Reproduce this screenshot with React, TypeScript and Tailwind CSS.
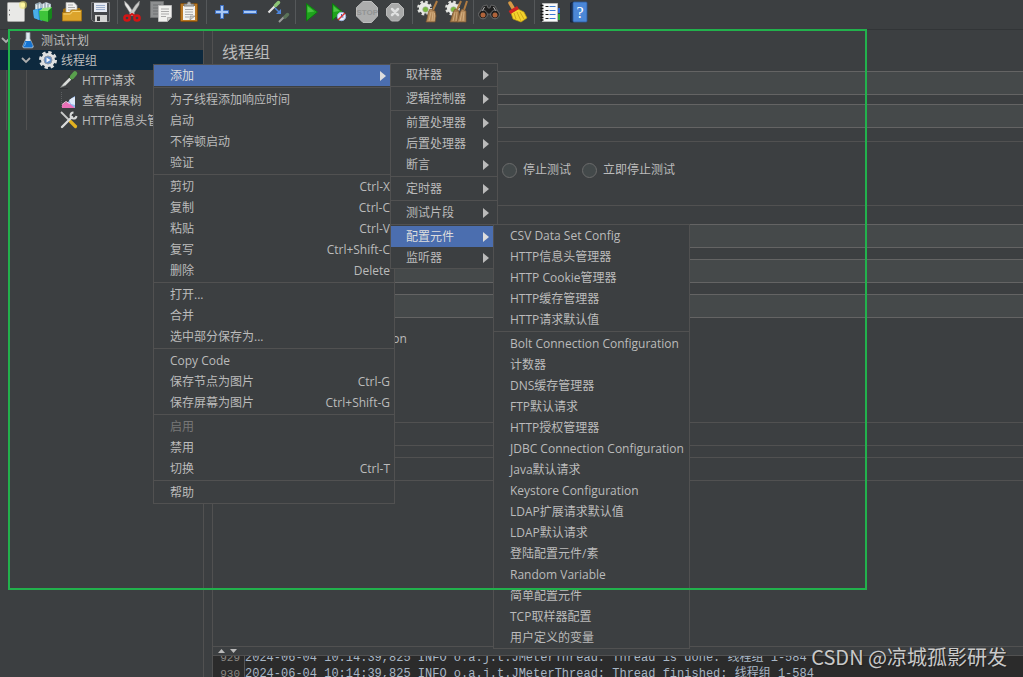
import React, { useState } from 'react'
import clsx from 'clsx'

const uiFont = 'font-["Open_Sans","Noto_Sans_CJK_SC",sans-serif]'

/* ---------- toolbar icons ---------- */

function Icon({ children }: { children: React.ReactNode }) {
    return (
        <svg viewBox="0 0 24 24" className="size-6 shrink-0" aria-hidden="true">
            {children}
        </svg>
    )
}

const NewIcon = () => (
    <Icon>
        <rect x="2.5" y="2.5" width="17" height="19" rx="1" fill="#e9e9e7" stroke="#a5a5a3" />
        <path d="M4.5 9.5v1.5M4.5 14v1.5" stroke="#777" />
        <circle cx="18" cy="5" r="4" fill="#f4ea6a" opacity=".55" />
        <circle cx="18" cy="5" r="2.2" fill="#fff7a0" />
    </Icon>
)

const TemplatesIcon = () => (
    <Icon>
        <path d="M2 4l5-2 2 2 4-2 5 2v7H2z" fill="#aebfc9" />
        <path d="M3 5l4-1v6H3zM10 4l4-1 3 2v6h-7z" fill="#e4ebef" />
        <path d="M5 3v6M12 3v6M15 4v5" stroke="#6e8795" />
        <path d="M0 10l9-2v13l-8-3z" fill="#1f86d0" />
        <path d="M0 10l5-1 1 11-5-2z" fill="#49aee9" />
        <path d="M6 11l9-1v12l-8-2z" fill="#3ec43a" />
        <path d="M15 10l4-3v11l-4 4z" fill="#15871b" />
        <path d="M6 11l4-3 9-1-4 4z" fill="#90e87b" />
    </Icon>
)

const OpenIcon = () => (
    <Icon>
        <path d="M2 9l3-1h14v12H2z" fill="#9b6a0b" />
        <path d="M5 2.5h8l3 3V14H5z" fill="#f2f2f0" stroke="#aaa" strokeWidth=".7" />
        <path d="M7 5h5M7 7.5h7M7 10h7" stroke="#aaa" />
        <path d="M1.500 12.500h7l2-2.500h10v11h-19z" fill="#dca42c" stroke="#a87510" strokeWidth=".8" />
        <path d="M2.500 14h7l2-2.500h8" fill="none" stroke="#f7d579" />
    </Icon>
)

const SaveIcon = () => (
    <Icon>
        <path d="M2.500 2.500h18v19h-16l-2-2z" fill="#45474a" stroke="#77797c" />
        <rect x="5" y="3" width="13" height="9" fill="#e6eaf2" />
        <path d="M7 5.500h9M7 7.500h9M7 9.500h9" stroke="#9baecd" />
        <rect x="6" y="15" width="12" height="7" fill="#d5d5d3" />
        <rect x="8" y="16.500" width="3" height="4.500" fill="#38393b" />
    </Icon>
)

const CutIcon = () => (
    <Icon>
        <path d="M2.500 1l4 4 6 9-2.500 2-7-11z" fill="#e7e7e5" stroke="#999" strokeWidth=".5" />
        <path d="M17.500 1l-4 4-6 9 2.500 2 7-11z" fill="#c9c9c7" stroke="#999" strokeWidth=".5" />
        <ellipse cx="5" cy="18" rx="2.600" ry="2.600" fill="none" stroke="#d31515" strokeWidth="2.500" />
        <ellipse cx="15" cy="18" rx="2.600" ry="2.600" fill="none" stroke="#d31515" strokeWidth="2.500" />
        <path d="M7 16l3-2 3 2" stroke="#d31515" strokeWidth="2" fill="none" />
    </Icon>
)

const CopyIcon = () => (
    <Icon>
        <path d="M.5 1.500h13v16H.5z" fill="#8d8f90" stroke="#707273" />
        <path d="M3 5h8M3 8h8M3 11h5M3 14h5" stroke="#6f7172" />
        <path d="M8.500 5.500h13v12l-4 4h-9z" fill="#f0f0ee" stroke="#bbb" />
        <path d="M11 9h8M11 11.500h8M11 14h8M11 16.500h5" stroke="#aaa" />
        <path d="M17.500 21.500v-4h4z" fill="#cfcfcd" stroke="#999" strokeWidth=".6" />
    </Icon>
)

const PasteIcon = () => (
    <Icon>
        <rect x="2.500" y="3.500" width="17" height="18" rx="1" fill="#bb7a25" stroke="#7e4e10" />
        <path d="M5 6h12v14H5z" fill="#f2f2ef" />
        <path d="M7 9.500h8M7 12h8M7 14.500h8M7 17h4" stroke="#aaa" />
        <path d="M12 20v-4l5 0z" fill="#c8c8c5" stroke="#888" strokeWidth=".6" />
        <path d="M6 6V4h3c0-3 4-3 4 0h3v2z" fill="#b9bbb8" stroke="#666" strokeWidth=".8" />
    </Icon>
)

const PlusIcon = () => (
    <Icon>
        <path d="M9.500 5.500h3v5h5v3h-5v5h-3v-5h-5v-3h5z" fill="#a9c9f5" stroke="#3e6fc0" />
    </Icon>
)

const MinusIcon = () => (
    <Icon>
        <rect x="4.500" y="10.500" width="13" height="3" fill="#a9c9f5" stroke="#3e6fc0" />
    </Icon>
)

const ToggleIcon = () => (
    <Icon>
        <path d="M1.500 12.500l7-7" stroke="#e6e6e6" strokeWidth="2.200" />
        <path d="M7 4l3 3" stroke="#3d3d3d" strokeWidth="1.500" />
        <path d="M8.500 5.500l3-3" stroke="#8cc476" strokeWidth="3.500" strokeLinecap="round" />
        <path d="M8 8l4 4" stroke="#4d86dd" strokeWidth="1.500" />
        <path d="M14 9v5H9z" fill="#4d86dd" />
        <path d="M12 22l5-5" stroke="#9a9c9b" strokeWidth="2" />
        <path d="M18 17l2.500-2.500" stroke="#5b7358" strokeWidth="3.500" strokeLinecap="round" />
    </Icon>
)

const RunIcon = () => (
    <Icon>
        <path d="M6.500 3.500l11 8.500-11 9z" fill="#1fa31d" stroke="#0d7a10" />
        <path d="M7.500 6l7 5.500-7 1z" fill="#5cd253" opacity=".7" />
    </Icon>
)

const RunNoTimersIcon = () => (
    <Icon>
        <path d="M4.500 3.500l10 8.500-10 8z" fill="#1fa31d" stroke="#0d7a10" />
        <path d="M5.500 6l6 5-6 1z" fill="#5cd253" opacity=".7" />
        <circle cx="13.500" cy="16.500" r="4.200" fill="#e6eefc" stroke="#9db4dc" />
        <path d="M13.500 14v3h2" stroke="#3866b5" fill="none" />
        <path d="M10 20l7-7" stroke="#dc3030" strokeWidth="1.500" />
    </Icon>
)

const StopIcon = () => (
    <Icon>
        <path d="M7 1.500h8.500l6 6V16l-6 6.500H7L.5 16V7.500z" fill="#acadad" stroke="#bdbebe" />
        <text x="11.200" y="15" textAnchor="middle" fontSize="8" fontWeight="700" fontFamily="Liberation Sans, sans-serif" fill="#929494">
            STOP
        </text>
    </Icon>
)

const ShutdownIcon = () => (
    <Icon>
        <path d="M7.500 3.500h7l5 5v7l-5 5.500h-7l-5-5.500v-7z" fill="#a9aaaa" stroke="#b9baba" />
        <path d="M8 9l6 6M14 9l-6 6" stroke="#dfe0e0" strokeWidth="2.500" strokeLinecap="round" />
    </Icon>
)

const GearShape = () => (
    <>
        <circle cx="7.500" cy="8" r="6.200" fill="none" stroke="#e0e1de" strokeWidth="2.400" strokeDasharray="2.600 2.270" />
        <circle cx="7.500" cy="8" r="5.600" fill="#e9eae7" />
        <circle cx="8.500" cy="9.500" r="2.800" fill="#79b83f" stroke="#aaa" strokeWidth=".6" />
    </>
)

const ClearIcon = () => (
    <Icon>
        <GearShape />
        <path d="M20 1l-4 9" stroke="#b07c42" strokeWidth="2" />
        <path d="M13 9l5 2 1 5-1 6-9 0c2-4 1-9 4-13z" fill="#b48a5b" stroke="#7d5730" strokeWidth=".7" />
        <path d="M14 12l-2 9M16 12l-1 9M17.500 13l-.5 8" stroke="#e0bf91" strokeWidth=".7" />
    </Icon>
)

const ClearAllIcon = () => (
    <Icon>
        <GearShape />
        <path d="M16 1l-4 9M22 1l-3 9" stroke="#b07c42" strokeWidth="2" />
        <path d="M10 9l4 2v11H5c2-4 2-9 5-13z" fill="#a87d4d" stroke="#7d5730" strokeWidth=".7" />
        <path d="M17 9l4 2v11h-9c2-4 2-9 5-13z" fill="#b48a5b" stroke="#7d5730" strokeWidth=".7" />
        <path d="M10 12l-2 9M12 12l-1 9M17 12l-2 9M19 12l-1 9" stroke="#e0bf91" strokeWidth=".7" />
    </Icon>
)

const SearchIcon = () => (
    <Icon>
        <path d="M5 6l4-1 1 3h2l1-3 4 1 4 8H1z" fill="#1f1f1f" stroke="#777" strokeWidth=".7" />
        <circle cx="5" cy="14.500" r="4.300" fill="#1c1c1c" stroke="#888" strokeWidth=".7" />
        <circle cx="17" cy="14.500" r="4.300" fill="#1c1c1c" stroke="#888" strokeWidth=".7" />
        <circle cx="5" cy="15" r="2.500" fill="#b0643b" />
        <circle cx="17" cy="15" r="2.500" fill="#b0643b" />
        <path d="M6.500 7l-2 3.500M15.500 7l2 3.500" stroke="#bbb" />
    </Icon>
)

const BroomIcon = () => (
    <Icon>
        <path d="M4 3l3 5" stroke="#d79a45" strokeWidth="3.500" strokeLinecap="round" />
        <path d="M12 9l6 3 3 6-6 4-8-3-2-6z" fill="#f3d32c" stroke="#b8960f" strokeWidth=".7" />
        <path d="M3.500 12.500l8.500-5" stroke="#cf2222" strokeWidth="3.500" />
        <path d="M8 13l2 6M11 12l4 9M14 12l4 7" stroke="#c49c13" strokeWidth=".8" />
    </Icon>
)

const FunctionIcon = () => (
    <Icon>
        <path d="M18 8h3v5h-3z" fill="#2d67d6" />
        <path d="M18 14h3v6h-3z" fill="#2da83a" />
        <path d="M3.500 3.500h15v18h-15z" fill="#fafafa" stroke="#bbb" />
        <path d="M6.500 6.500h3M6.500 10.500h3M6.500 14.500h3M6.500 18.500h3" stroke="#222" />
        <path d="M10.500 6.500h6M10.500 10.500h6M10.500 14.500h6M10.500 18.500h6" stroke="#3c7ad4" />
        <path d="M1.500 5.500h3M1.500 8.500h3M1.500 11.500h3M1.500 14.500h3M1.500 17.500h3M1.500 20h3" stroke="#151515" strokeWidth="1.500" />
    </Icon>
)

const HelpIcon = () => (
    <Icon>
        <path d="M3.500 3l3-1v20h-3z" fill="#1b2c47" stroke="#16233a" />
        <rect x="6" y="2" width="14" height="20" rx="1" fill="#4b87d7" stroke="#2c5c9f" strokeWidth=".8" />
        <text x="13" y="18" textAnchor="middle" fontSize="16" fontFamily="Liberation Serif, serif" fill="#fff">
            ?
        </text>
    </Icon>
)

const toolGroups = [
    [
        { label: 'New', icon: NewIcon },
        { label: 'Templates', icon: TemplatesIcon },
        { label: 'Open', icon: OpenIcon },
        { label: 'Save', icon: SaveIcon },
    ],
    [
        { label: 'Cut', icon: CutIcon },
        { label: 'Copy', icon: CopyIcon },
        { label: 'Paste', icon: PasteIcon },
    ],
    [
        { label: 'Expand all', icon: PlusIcon },
        { label: 'Collapse all', icon: MinusIcon },
        { label: 'Toggle', icon: ToggleIcon },
    ],
    [
        { label: 'Start', icon: RunIcon },
        { label: 'Start no pauses', icon: RunNoTimersIcon },
        { label: 'Stop', icon: StopIcon },
        { label: 'Shutdown', icon: ShutdownIcon },
    ],
    [
        { label: 'Clear', icon: ClearIcon },
        { label: 'Clear all', icon: ClearAllIcon },
    ],
    [
        { label: 'Search', icon: SearchIcon },
        { label: 'Reset search', icon: BroomIcon },
    ],
    [
        { label: 'Function helper', icon: FunctionIcon },
        { label: 'Help', icon: HelpIcon },
    ],
]

function Toolbar() {
    return (
        <header className="flex h-[30px] shrink-0 items-start border-b border-[#323537] pl-[3px]">
            {toolGroups.map((group, i) => (
                <div key={i} className="flex">
                    {i > 0 && <span className="mx-0.5 h-6 w-px bg-[#55585a]" />}
                    {group.map(({ label, icon: Glyph }) => (
                        <button key={label} type="button" aria-label={label} className="flex w-7 justify-center">
                            <Glyph />
                        </button>
                    ))}
                </div>
            ))}
        </header>
    )
}

/* ---------- test plan tree ---------- */

const FlaskIcon = () => (
    <svg viewBox="0 0 14 18" className="h-[18px] w-3.5 shrink-0" aria-hidden="true">
        <path d="M5 1.500h4v6l3.500 8-1 1.500h-9l-1-1.500 3.500-8z" fill="#dfe9f0" stroke="#8b979e" strokeWidth=".8" />
        <path d="M4.200 10h5.600l2.200 5-1 1.500H3L2 15z" fill="#1673cf" />
        <path d="M5 11l-1.500 4" stroke="#72b5f3" />
    </svg>
)

const ThreadGroupIcon = () => (
    <svg viewBox="0 0 20 20" className="size-5 shrink-0" aria-hidden="true">
        <circle cx="10" cy="10" r="7.600" fill="none" stroke="#dcdedf" strokeWidth="2.800" strokeDasharray="3.300 2.669" />
        <circle cx="10" cy="10" r="7" fill="#dfe1e2" />
        <circle cx="10" cy="10" r="4" fill="#5d8bc8" stroke="#8a98a8" />
        <path d="M8.500 7.500l4 2.500-4 2.500z" fill="#f2f6fb" />
    </svg>
)

const DropperIcon = () => (
    <svg viewBox="0 0 20 20" className="size-5 shrink-0" aria-hidden="true">
        <path d="M1 18.500h8" stroke="#26282a" opacity=".6" />
        <path d="M1.500 17.500l3-4 6-6 2 2-6 6z" fill="#d9dcda" stroke="#777a78" strokeWidth=".6" />
        <path d="M9.500 5.500l4.500 4.500" stroke="#2f3a2e" strokeWidth="1.800" />
        <path d="M13 7l3-3.500" stroke="#5aa14d" strokeWidth="4.500" strokeLinecap="round" />
    </svg>
)

const ResultsIcon = () => (
    <svg viewBox="0 0 20 20" className="size-5 shrink-0" aria-hidden="true">
        <path d="M2.500 2v15.500" stroke="#5c5f61" strokeDasharray="1 1" />
        <path d="M8 13l5-5 3-2v12H8z" fill="#8fb7ef" />
        <path d="M10 10l3-2 3-1v8l-4-1z" fill="#dfeafb" />
        <path d="M3 18v-3l4-3 4 2 5 4z" fill="#ea70b8" />
        <path d="M3 14.500l4-3 4 2.500" fill="none" stroke="#f8c5e2" />
    </svg>
)

const WrenchIcon = () => (
    <svg viewBox="0 0 20 20" className="size-5 shrink-0" aria-hidden="true">
        <path d="M2 2l9 9" stroke="#c9cbcb" strokeWidth="1.800" />
        <path d="M11.500 11.500l5 5" stroke="#e3b120" strokeWidth="3.200" strokeLinecap="round" />
        <path d="M3 17L13 7" stroke="#d8dada" strokeWidth="2.400" strokeLinecap="round" />
        <path d="M14.500 2.500a3 3 0 1 0 3 3.500" fill="none" stroke="#d8dada" strokeWidth="2" />
    </svg>
)

const Chevron = () => (
    <svg viewBox="0 0 10 8" className="h-2 w-2.5 shrink-0" aria-hidden="true">
        <path d="M1 2l4 4 4-4" fill="none" stroke="#adadad" strokeWidth="1.800" />
    </svg>
)

function TreePanel() {
    const leaves = [
        { text: 'HTTP请求', icon: <DropperIcon /> },
        { text: '查看结果树', icon: <ResultsIcon /> },
        { text: 'HTTP信息头管理器', icon: <WrenchIcon /> },
    ]
    return (
        <nav className="w-[204px] shrink-0 overflow-hidden border-r border-[#515151]">
            <ul role="tree" className="leading-[18px]">
                <li role="treeitem">
                    <div className="flex h-5 items-center pl-px">
                        <Chevron />
                        <span className="ml-2.5 flex items-center gap-1.5 whitespace-nowrap">
                            <FlaskIcon />
                            <span className="pt-0.5">测试计划</span>
                        </span>
                    </div>
                    <ul role="group">
                        <li role="treeitem" aria-selected="true">
                            <div className="flex h-5 items-center bg-[#0d293e] pl-[21px]">
                                <Chevron />
                                <span className="ml-[7px] flex items-center gap-[3px] whitespace-nowrap">
                                    <ThreadGroupIcon />
                                    <span className="pt-0.5">线程组</span>
                                </span>
                            </div>
                            <div className="ml-1.5 border-l border-[#515151] pl-[19px]">
                                <ul role="group" className="border-l border-[#515151] pl-8">
                                    {leaves.map((leaf) => (
                                        <li key={leaf.text} role="treeitem" className="flex h-5 items-center gap-[3px] whitespace-nowrap">
                                            {leaf.icon}
                                            <span className="pt-0.5">{leaf.text}</span>
                                        </li>
                                    ))}
                                </ul>
                            </div>
                        </li>
                    </ul>
                </li>
            </ul>
        </nav>
    )
}

/* ---------- thread group form ---------- */

function Field({ label, disabled = false }: { label: string; disabled?: boolean }) {
    return (
        <input
            type="text"
            aria-label={label}
            disabled={disabled}
            className={clsx(
                'ml-24 block h-6 border-y px-1.5 outline-none',
                disabled ? 'border-[#515151] bg-transparent' : 'border-[#646464] bg-[#45494a]',
            )}
        />
    )
}

function Radio({ label }: { label: string }) {
    return (
        <label className="flex items-center gap-1.5 whitespace-nowrap">
            <input type="radio" name="on-error" className="size-[15px] appearance-none rounded-full border border-[#6b6b6b] bg-[#43494a]" />
            {label}
        </label>
    )
}

function ThreadGroupForm() {
    return (
        <form className="flex min-h-0 flex-1 flex-col overflow-hidden pl-[9px]">
            <h1 className="pt-2.5 text-[16px] leading-6">线程组</h1>
            <div className="mt-[7px] flex flex-col gap-[9px]">
                <Field label="名称" />
                <Field label="注释" />
            </div>
            <div className="mt-[13px] flex h-[65px] items-center gap-[11px] border-y border-[#515151] pb-[7px] pl-[280px]">
                <Radio label="停止测试" />
                <Radio label="立即停止测试" />
            </div>
            <div className="mt-[18px] flex flex-col gap-[11px]">
                <Field label="线程数" />
                <Field label="Ramp-Up" />
                <Field label="循环次数" />
            </div>
            <label className="mt-[11px] flex h-5 items-center gap-1.5 pl-[7px] whitespace-nowrap">
                <input type="checkbox" className="size-[15px] appearance-none border border-[#6b6b6b] bg-[#43494a]" />
                Same user on each iteration
            </label>
            <div className="mt-[73px] flex flex-col gap-[11px]">
                <Field label="持续时间" disabled />
                <Field label="启动延迟" disabled />
            </div>
        </form>
    )
}

function LogPanel() {
    const lines = [
        { no: 929, text: '2024-06-04 10:14:39,825 INFO o.a.j.t.JMeterThread: Thread is done: 线程组 1-584' },
        { no: 930, text: '2024-06-04 10:14:39,825 INFO o.a.j.t.JMeterThread: Thread finished: 线程组 1-584' },
    ]
    return (
        <section className="shrink-0">
            <div className="flex h-2.5 items-center gap-[5px] border-y border-[#515151] pl-[5px]">
                <svg viewBox="0 0 7 4" className="h-1 w-[7px]" aria-hidden="true">
                    <path d="M0 4l3.500-4L7 4z" fill="#bbbbbb" />
                </svg>
                <svg viewBox="0 0 7 4" className="h-1 w-[7px]" aria-hidden="true">
                    <path d="M0 0h7L3.500 4z" fill="#bbbbbb" />
                </svg>
            </div>
            <div className='h-[21px] overflow-hidden bg-[#2b2b2b] font-["Liberation_Mono","Noto_Sans_CJK_SC",monospace] text-[12px] leading-4 text-[#a9b7c6]'>
                <div className="-mt-1.5">
                    {lines.map((line) => (
                        <div key={line.no} className="flex h-4 whitespace-nowrap">
                            <span className="w-8 border-r border-[#555555] pr-1 text-right text-[11px] text-[#8a8782]">{line.no}</span>
                            <span>{line.text}</span>
                        </div>
                    ))}
                </div>
            </div>
        </section>
    )
}

/* ---------- context menus ---------- */

interface MenuEntry {
    text: string
    keys?: string
    sub?: boolean
    disabled?: boolean
}

interface MenuProps {
    label: string
    groups: MenuEntry[][]
    active?: string
    onPick?: (text: string) => void
    itemClass?: string
    className?: string
}

function Menu({ label, groups, active, onPick, itemClass, className }: MenuProps) {
    return (
        <div role="menu" aria-label={label} className={clsx('absolute border border-[#515151] bg-[#3c3f41]', className)}>
            {groups.map((group, i) => (
                <div key={i}>
                    {i > 0 && <hr className="my-px border-[#515151]" />}
                    {group.map((entry) => (
                        <button
                            key={entry.text}
                            type="button"
                            role="menuitem"
                            disabled={entry.disabled}
                            onClick={() => onPick?.(entry.text)}
                            className={clsx(
                                'flex h-[21px] w-full items-center justify-between whitespace-nowrap',
                                itemClass,
                                entry.disabled && 'text-[#777777]',
                                entry.text === active && 'bg-[#4b6eaf] text-[#dddddd]',
                            )}
                        >
                            <span>{entry.text}</span>
                            {entry.keys && <span>{entry.keys}</span>}
                            {entry.sub && (
                                <svg viewBox="0 0 6 10" className="mr-1 h-2.5 w-1.5" aria-hidden="true">
                                    <path d="M0 0l6 5-6 5z" fill="currentColor" />
                                </svg>
                            )}
                        </button>
                    ))}
                </div>
            ))}
        </div>
    )
}

const mainMenu: MenuEntry[][] = [
    [{ text: '添加', sub: true }],
    [{ text: '为子线程添加响应时间' }, { text: '启动' }, { text: '不停顿启动' }, { text: '验证' }],
    [
        { text: '剪切', keys: 'Ctrl-X' },
        { text: '复制', keys: 'Ctrl-C' },
        { text: '粘贴', keys: 'Ctrl-V' },
        { text: '复写', keys: 'Ctrl+Shift-C' },
        { text: '删除', keys: 'Delete' },
    ],
    [{ text: '打开...' }, { text: '合并' }, { text: '选中部分保存为...' }],
    [
        { text: 'Copy Code' },
        { text: '保存节点为图片', keys: 'Ctrl-G' },
        { text: '保存屏幕为图片', keys: 'Ctrl+Shift-G' },
    ],
    [{ text: '启用', disabled: true }, { text: '禁用' }, { text: '切换', keys: 'Ctrl-T' }],
    [{ text: '帮助' }],
]

const addMenu: MenuEntry[][] = [
    [{ text: '取样器', sub: true }],
    [{ text: '逻辑控制器', sub: true }],
    [
        { text: '前置处理器', sub: true },
        { text: '后置处理器', sub: true },
        { text: '断言', sub: true },
    ],
    [{ text: '定时器', sub: true }],
    [{ text: '测试片段', sub: true }],
    [
        { text: '配置元件', sub: true },
        { text: '监听器', sub: true },
    ],
]

const configMenu: MenuEntry[][] = [
    [
        { text: 'CSV Data Set Config' },
        { text: 'HTTP信息头管理器' },
        { text: 'HTTP Cookie管理器' },
        { text: 'HTTP缓存管理器' },
        { text: 'HTTP请求默认值' },
    ],
    [
        { text: 'Bolt Connection Configuration' },
        { text: '计数器' },
        { text: 'DNS缓存管理器' },
        { text: 'FTP默认请求' },
        { text: 'HTTP授权管理器' },
        { text: 'JDBC Connection Configuration' },
        { text: 'Java默认请求' },
        { text: 'Keystore Configuration' },
        { text: 'LDAP扩展请求默认值' },
        { text: 'LDAP默认请求' },
        { text: '登陆配置元件/素' },
        { text: 'Random Variable' },
        { text: '简单配置元件' },
        { text: 'TCP取样器配置' },
        { text: '用户定义的变量' },
    ],
]

export default function App() {
    const [category, setCategory] = useState('配置元件')

    return (
        <div className={clsx('relative flex h-screen flex-col overflow-hidden bg-[#3c3f41] text-[12px] leading-4 text-[#bbbbbb]', uiFont)}>
            <Toolbar />
            <div className="flex min-h-0 flex-1">
                <TreePanel />
                <main className="ml-2 flex min-w-0 flex-1 flex-col border-l border-[#515151]">
                    <ThreadGroupForm />
                    <LogPanel />
                </main>
            </div>

            <Menu label="线程组" groups={mainMenu} active="添加" itemClass="pr-1 pl-4" className="top-16 left-[153px] w-[242px]" />
            <Menu label="添加" groups={addMenu} active={category} onPick={setCategory} itemClass="pr-1 pl-[15px]" className="top-[63px] left-[390px] w-[108px]" />
            <Menu label="配置元件" groups={configMenu} itemClass="pl-4" className="top-56 left-[493px] w-[197px]" />

            {/* Highlight frame */}
            <div className="pointer-events-none absolute top-[29px] left-2 h-[561px] w-[859px] border-2 border-[#22b14c]" />

            {/* Watermark */}
            <div className='pointer-events-none absolute right-4 bottom-2 font-["Noto_Sans_CJK_SC",sans-serif] text-[20px] leading-6 text-[#c9c9c9] [text-shadow:1px_1px_1px_#222]'>
                CSDN @凉城孤影研发
            </div>
        </div>
    )
}
